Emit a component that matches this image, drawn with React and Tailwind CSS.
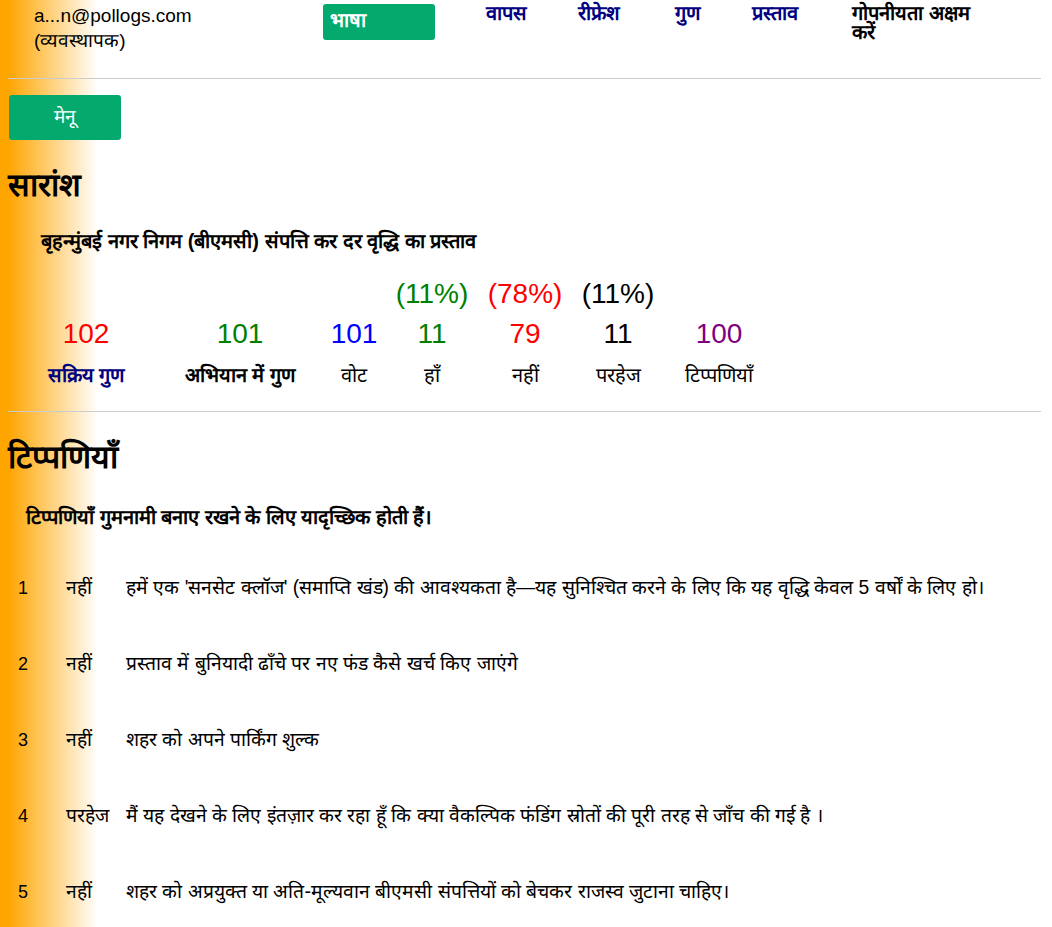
import React from "react";

const stats = [
  { w: "w-[120px]", pct: null, num: "102", numC: "text-[#ff0000]", label: "सक्रिय गुण", labC: "text-[#000080] font-bold" },
  { w: "w-[188px]", pct: null, num: "101", numC: "text-[#008000]", label: "अभियान में गुण", labC: "text-black font-bold" },
  { w: "w-[40px]", pct: null, num: "101", numC: "text-[#0000ff]", label: "वोट", labC: "text-black" },
  { w: "w-[116px]", pct: "(11%)", pctC: "text-[#008000]", num: "11", numC: "text-[#008000]", label: "हाँ", labC: "text-black" },
  { w: "w-[70px]", pct: "(78%)", pctC: "text-[#ff0000]", num: "79", numC: "text-[#ff0000]", label: "नहीं", labC: "text-black" },
  { w: "w-[116px]", pct: "(11%)", pctC: "text-black", num: "11", numC: "text-black", label: "परहेज", labC: "text-black" },
  { w: "w-[86px]", pct: null, num: "100", numC: "text-[#800080]", label: "टिप्पणियाँ", labC: "text-black" },
];

const comments = [
  ["1", "नहीं", "हमें एक 'सनसेट क्लॉज' (समाप्ति खंड) की आवश्यकता है—यह सुनिश्चित करने के लिए कि यह वृद्धि केवल 5 वर्षों के लिए हो।"],
  ["2", "नहीं", "प्रस्ताव में बुनियादी ढाँचे पर नए फंड कैसे खर्च किए जाएंगे"],
  ["3", "नहीं", "शहर को अपने पार्किंग शुल्क"],
  ["4", "परहेज", "मैं यह देखने के लिए इंतज़ार कर रहा हूँ कि क्या वैकल्पिक फंडिंग स्रोतों की पूरी तरह से जाँच की गई है ।"],
  ["5", "नहीं", "शहर को अप्रयुक्त या अति-मूल्यवान बीएमसी संपत्तियों को बेचकर राजस्व जुटाना चाहिए।"],
];

export default function App() {
  return (
    <div
      className="min-h-[927px] w-[1052px] overflow-hidden bg-[linear-gradient(to_right,#ffa500_8px,#ffffff_98px)] text-black"
      style={{ fontFamily: '"Liberation Sans", Arial, sans-serif' }}
    >
      <div className="pl-2 pr-[11px]">
        {/* header */}
        <div className="flex h-[78px] items-start">
          <div className="ml-[26px] mt-[3px] w-[289px] text-[19px] leading-[25px]">
            <div>a...n@pollogs.com</div>
            <div>(व्यवस्थापक)</div>
          </div>
          <div className="mt-1 flex h-9 w-28 items-start rounded-[3px] bg-[#04aa6d] pl-[7px] pt-[5px] text-[20px] font-bold leading-[22px] text-white">
            भाषा
          </div>
          <div className="ml-[51px] mt-[4px] flex text-[20px] font-bold leading-[19px] text-[#000080]">
            <span className="w-[92px]">वापस</span>
            <span className="w-[97px]">रीफ्रेश</span>
            <span className="w-[77px]">गुण</span>
            <span className="w-[100px]">प्रस्ताव</span>
            <span className="w-[134px] text-black">गोपनीयता अक्षम करें</span>
          </div>
        </div>
        <div className="h-px bg-[#cccccc]" />

        <div className="ml-px mt-4 flex h-[45px] w-28 items-center justify-center rounded-[3px] bg-[#04aa6d] text-[19px] text-white">
          मेनू
        </div>

        <h2 className="mt-[25px] text-[32px] font-bold leading-[40px]">सारांश</h2>
        <div className="ml-[33px] mt-[23px] text-[20px] font-bold leading-[26px]">
          बृहन्मुंबई नगर निगम (बीएमसी) संपत्ति कर दर वृद्धि का प्रस्ताव
        </div>

        <div className="ml-[18px] mt-[20px] flex">
          {stats.map((s, i) => (
            <div key={i} className={`${s.w} flex flex-col items-center whitespace-nowrap`}>
              <div className={`h-[40px] text-[28px] leading-[40px] ${s.pctC || ""}`}>{s.pct || ""}</div>
              <div className={`h-[40px] text-[28px] leading-[40px] ${s.numC}`}>{s.num}</div>
              <div className={`mt-[7px] text-[20px] leading-[28px] ${s.labC}`}>{s.label}</div>
            </div>
          ))}
        </div>

        <div className="mt-[22px] h-px bg-[#cccccc]" />

        <h2 className="mt-[23px] text-[32px] font-bold leading-[44px]">टिप्पणियाँ</h2>
        <div className="ml-[18px] mt-[25px] text-[20px] font-bold leading-[26px]">
          टिप्पणियाँ गुमनामी बनाए रखने के लिए यादृच्छिक होती हैं।
        </div>

        <div className="mt-[45px] flex flex-col gap-[50px] text-[19.3px] leading-[26px]">
          {comments.map(([n, st, t]) => (
            <div key={n} className="flex whitespace-nowrap">
              <span className="w-[58px] pl-[10px] text-[18px]">{n}</span>
              <span className="w-[60px]">{st}</span>
              <span>{t}</span>
            </div>
          ))}
        </div>
      </div>
    </div>
  );
}
